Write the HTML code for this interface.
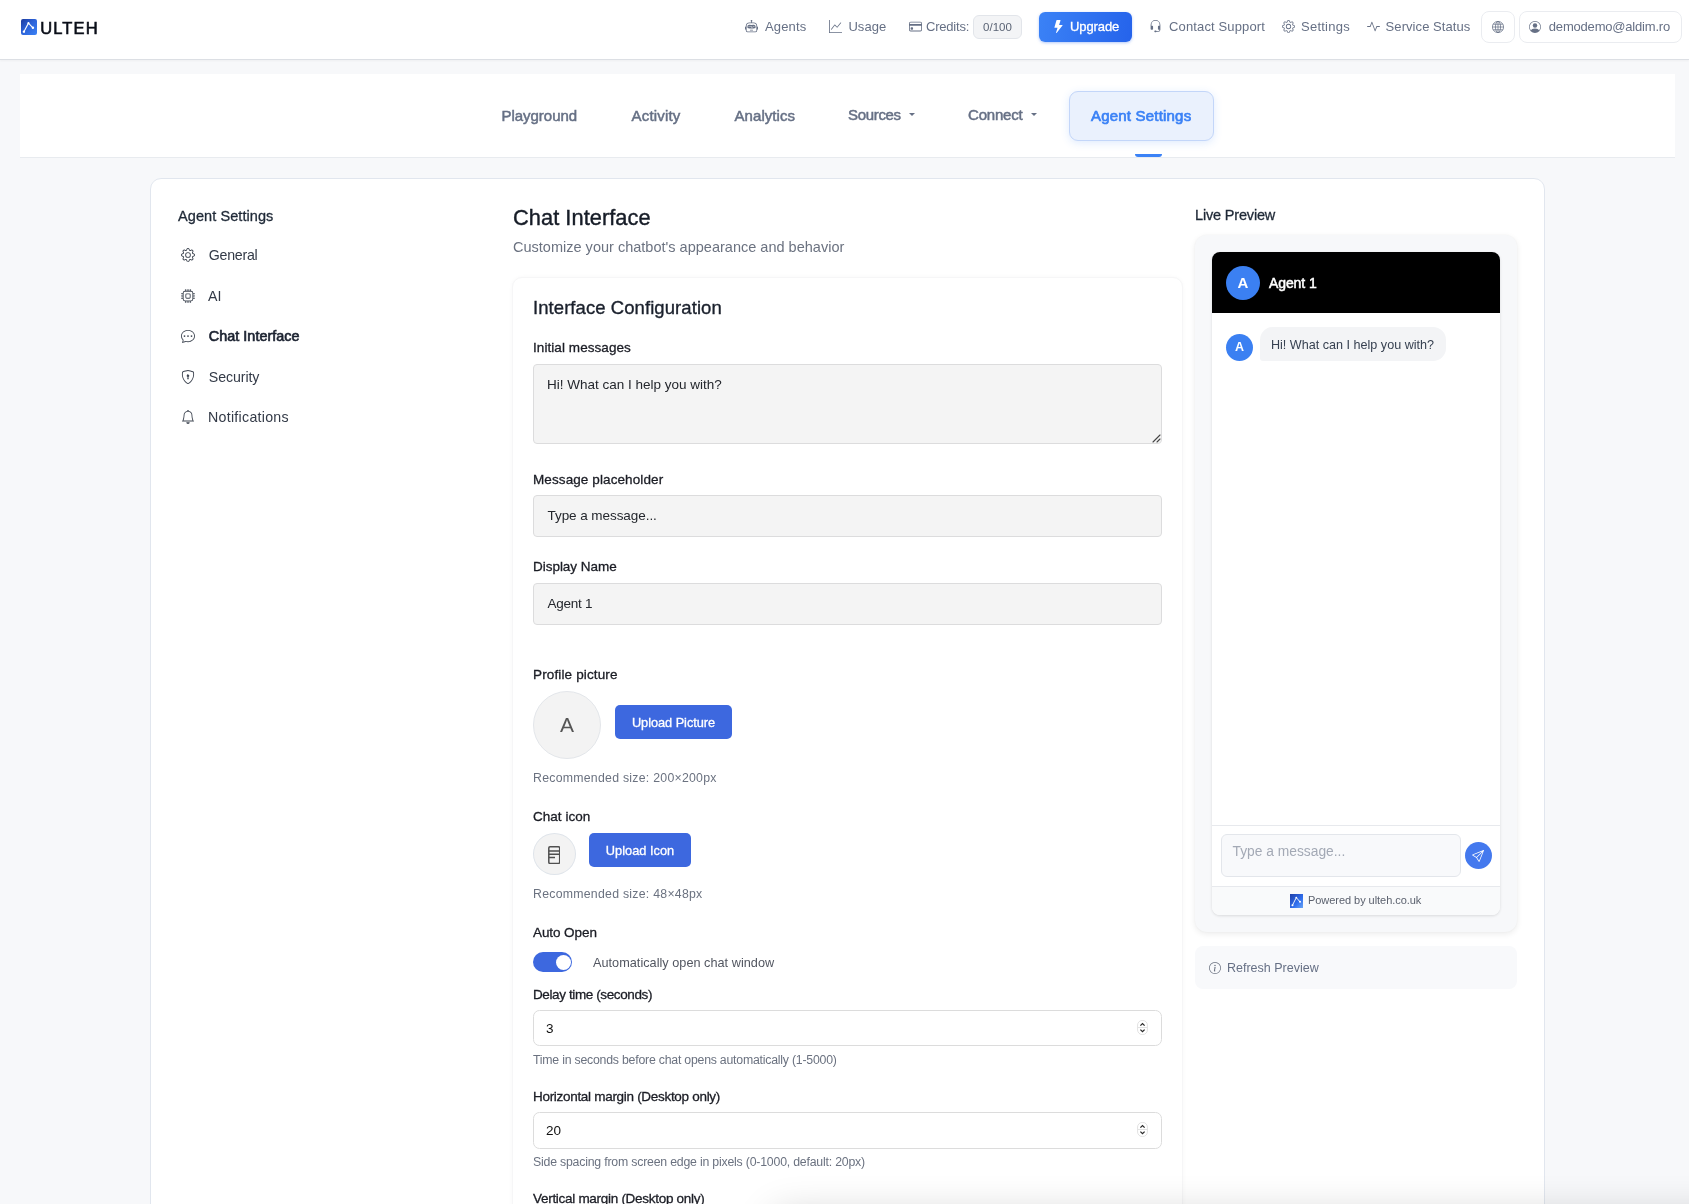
<!DOCTYPE html>
<html lang="en">
<head>
<meta charset="utf-8">
<title>Ulteh - Agent Settings - Chat Interface</title>
<style>
*{box-sizing:border-box;margin:0;padding:0}
html,body{width:1689px;height:1204px;overflow:hidden}
body{font-family:"Liberation Sans",Arial,sans-serif;background:#f7f8fa;color:#1f2937;position:relative;-webkit-font-smoothing:antialiased;will-change:transform}
svg{display:block}
.abs{position:absolute}
/* ---------- top nav ---------- */
#topnav{position:absolute;left:0;top:0;width:1689px;height:60px;background:#fff;border-bottom:1px solid #dcdfe4;box-shadow:0 1px 2px rgba(0,0,0,.04)}
#logo{position:absolute;left:21px;top:19px;width:15.500px;height:16px;border-radius:2px;background:linear-gradient(135deg,#1d3a9c 0%,#2c62d8 45%,#3b82f6 100%)}
#brand{position:absolute;left:40px;top:18px;font-size:16.500px;line-height:20px;font-weight:400;-webkit-text-stroke:.6px #0b0f19;letter-spacing:1.150px;color:#0b0f19}
.nl{position:absolute;top:18px;height:18px;line-height:18px;font-size:13px;color:#667085;white-space:nowrap}
.ni{position:absolute;color:#667085}
#credit-badge{position:absolute;left:973px;top:15px;width:49px;height:24px;border:1px solid #e2e5ea;background:#f3f4f6;border-radius:6px;font-size:11.5px;line-height:22px;text-align:center;color:#5b6475}
#upgrade{position:absolute;left:1039px;top:12px;width:93px;height:30px;border-radius:6px;background:linear-gradient(100deg,#3b82f6,#2563eb);box-shadow:0 1px 3px rgba(37,99,235,.35);color:#fff;font-size:13px;font-weight:400}
#upgrade span{position:absolute;left:31px;top:6px;line-height:18px;-webkit-text-stroke:.3px #fff;letter-spacing:-.1px}
.tbtn{position:absolute;top:11px;height:32px;border:1px solid #eaecf0;border-radius:8px;background:#fff}
/* ---------- tabs ---------- */
#tabs{position:absolute;left:20px;top:74px;width:1655px;height:84px;background:#fff;border-bottom:1px solid #e8ebef}
.tab{position:absolute;top:106px;height:20px;line-height:20px;font-size:15px;font-weight:400;-webkit-text-stroke:.5px currentColor;color:#667085;white-space:nowrap}
#tab-active{position:absolute;left:1069px;top:91px;width:145px;height:50px;border:1px solid #c3d6f9;background:#eaf1fd;border-radius:9px;box-shadow:0 2px 8px rgba(59,130,246,.16)}
#tab-ind{position:absolute;left:1135px;top:154px;width:27px;height:3px;background:#3b82f6;border-radius:0 0 3px 3px}
.caret{position:absolute;width:0;height:0;border-left:3px solid transparent;border-right:3px solid transparent;border-top:3px solid #667085}
/* ---------- main card ---------- */
#card{position:absolute;left:150px;top:178px;width:1395px;height:1100px;background:#fff;border:1px solid #e1e6ee;border-radius:11px}
.sb-title{position:absolute;left:178px;top:205.500px;font-size:14.500px;line-height:20px;color:#1f2937;-webkit-text-stroke:.3px #1f2937;white-space:nowrap}
.sb{position:absolute;left:208px;font-size:14.200px;line-height:20px;color:#333a47;white-space:nowrap}
.sb.on{-webkit-text-stroke:.65px #1b2230;color:#1b2230;font-size:14.400px}
.sbi{position:absolute;left:181px;color:#3f4652}
h1{position:absolute;left:513px;top:204px;font-size:21.800px;line-height:28px;font-weight:400;color:#161c27;-webkit-text-stroke:.4px #161c27;white-space:nowrap}
#sub{position:absolute;left:513px;top:237px;font-size:14.500px;line-height:20px;color:#6b7280;white-space:nowrap}
#inner{position:absolute;left:511.500px;top:277px;width:671px;height:1000px;border-radius:10px;background:#fff;border:1px solid #f6f6f7;box-shadow:0 0 4px rgba(0,0,0,.03)}
h2{position:absolute;left:533px;top:296px;font-size:18.500px;line-height:24px;font-weight:400;color:#1a202c;-webkit-text-stroke:.35px #1a202c;white-space:nowrap}
.lbl{position:absolute;left:533px;font-size:13.500px;line-height:18px;color:#1b1d25;-webkit-text-stroke:.3px #1b1d25;white-space:nowrap}
.fld{position:absolute;left:533px;width:629px;background:#f4f4f4;border:1px solid #dcdcdd;border-radius:4px;font-size:13.500px;color:#24272d;padding-left:14px;white-space:nowrap}
.num{position:absolute;left:533px;width:629px;background:#fff;border:1px solid #dcdcdc;border-radius:6.500px;font-size:13.5px;color:#111;padding-left:12px}
.help{position:absolute;left:533px;font-size:12.300px;line-height:16px;color:#6b7280;white-space:nowrap}
.btn{position:absolute;background:#3d68df;color:#fff;border-radius:5px;font-size:12.800px;text-align:center;-webkit-text-stroke:.3px #fff;white-space:nowrap}
.spin{position:absolute;width:9px;height:14px;border:1px solid #cfd2d7;border-radius:4px;background:#f7f7f7}
/* ---------- preview ---------- */
#pv-title{position:absolute;left:1195px;top:205px;font-size:14.500px;line-height:20px;color:#1f2937;-webkit-text-stroke:.3px #1f2937;white-space:nowrap}
#pv{position:absolute;left:1195px;top:235px;width:322px;height:697px;background:#f7f8fa;border-radius:12px;box-shadow:0 2px 6px rgba(0,0,0,.08),0 0 2px rgba(0,0,0,.04)}
#chat{position:absolute;left:1212px;top:252px;width:288px;height:663px;background:#fff;border-radius:8px;box-shadow:0 1px 3px rgba(0,0,0,.12);overflow:hidden}
#chat-h{position:absolute;left:0;top:0;width:288px;height:61px;background:#000}
.av{position:absolute;border-radius:50%;background:#3b80f2;color:#fff;font-weight:700;text-align:center}
#refresh{position:absolute;left:1195px;top:946px;width:322px;height:43px;background:#f8f9fb;border-radius:8px}
</style>
</head>
<body>
<div id="topnav">
  <svg id="logo" viewBox="0 0 16 16"><path d="M3 12.8 7.7 4l4.6 4.800" fill="none" stroke="#fff" stroke-width="1.1" stroke-linecap="round" stroke-linejoin="round"/><circle cx="3" cy="12.800" r="1.250" fill="#fff"/><circle cx="7.700" cy="4" r="1.100" fill="#fff"/><circle cx="12.300" cy="8.800" r="1.250" fill="#fff"/></svg>
  <div id="brand" style="letter-spacing:1.1px;left:40.3px">ULTEH</div>
  <svg class="ni" style="left:745px;top:20px" width="13" height="13" viewBox="0 0 16 16" fill="currentColor"><path d="M6 12.5a.5.5 0 0 1 .5-.5h3a.5.5 0 0 1 0 1h-3a.5.5 0 0 1-.5-.5ZM3 8.062C3 6.76 4.235 5.765 5.53 5.886a26.58 26.58 0 0 0 4.94 0C11.765 5.765 13 6.76 13 8.062v1.157a.933.933 0 0 1-.765.935c-.845.147-2.34.346-4.235.346-1.895 0-3.39-.2-4.235-.346A.933.933 0 0 1 3 9.219V8.062Zm4.542-.827a.25.25 0 0 0-.217.068l-.92.9a24.767 24.767 0 0 1-1.871-.183.25.25 0 0 0-.068.495c.55.076 1.232.149 2.02.193a.25.25 0 0 0 .189-.071l.754-.736.847 1.71a.25.25 0 0 0 .404.062l.932-.97a25.286 25.286 0 0 0 1.922-.188.25.25 0 0 0-.068-.495c-.538.074-1.207.145-1.98.189a.25.25 0 0 0-.166.076l-.754.785-.842-1.7a.25.25 0 0 0-.182-.135Z"/><path d="M8.5 1.866a1 1 0 1 0-1 0V3h-2A4.5 4.5 0 0 0 1 7.5V8a1 1 0 0 0-1 1v2a1 1 0 0 0 1 1v1a2 2 0 0 0 2 2h10a2 2 0 0 0 2-2v-1a1 1 0 0 0 1-1V9a1 1 0 0 0-1-1v-.5A4.5 4.5 0 0 0 10.5 3h-2V1.866ZM14 7.5V13a1 1 0 0 1-1 1H3a1 1 0 0 1-1-1V7.5A3.5 3.5 0 0 1 5.5 4h5A3.5 3.5 0 0 1 14 7.5Z"/></svg><div class="nl" style="left:765px;letter-spacing:0.16px">Agents</div>
  <svg class="ni" style="left:829px;top:20px" width="13" height="13" viewBox="0 0 16 16" fill="currentColor"><path fill-rule="evenodd" d="M0 0h1v15h15v1H0V0Zm14.817 3.113a.5.5 0 0 1 .07.704l-4.5 5.5a.5.5 0 0 1-.74.037L7.06 6.767l-3.656 5.027a.5.5 0 0 1-.808-.588l4-5.5a.5.5 0 0 1 .758-.06l2.609 2.61 4.15-5.073a.5.5 0 0 1 .704-.07Z"/></svg><div class="nl" style="letter-spacing:0.05px;left:848.4px">Usage</div>
  <svg class="ni" style="left:909px;top:20px" width="13" height="13" viewBox="0 0 16 16" fill="currentColor"><path d="M0 4a2 2 0 0 1 2-2h12a2 2 0 0 1 2 2v8a2 2 0 0 1-2 2H2a2 2 0 0 1-2-2V4zm2-1a1 1 0 0 0-1 1v1h14V4a1 1 0 0 0-1-1H2zm13 4H1v5a1 1 0 0 0 1 1h12a1 1 0 0 0 1-1V7z"/><path d="M2 10a1 1 0 0 1 1-1h1a1 1 0 0 1 1 1v1a1 1 0 0 1-1 1H3a1 1 0 0 1-1-1v-1z"/></svg><div class="nl" style="left:926px;letter-spacing:-0.21px">Credits:</div>
  <div id="credit-badge">0/100</div>
  <div id="upgrade"><svg class="abs" style="left:13px;top:8px;color:#fff" width="13" height="13" viewBox="0 0 16 16" fill="currentColor" style="color:#fff"><path d="M5.52.359A.5.5 0 0 1 6 0h4a.5.5 0 0 1 .474.658L8.694 6H12.5a.5.5 0 0 1 .395.807l-7 9a.5.5 0 0 1-.873-.454L6.823 9.5H3.5a.5.5 0 0 1-.48-.641l2.5-8.5z"/></svg><span>Upgrade</span></div>
  <svg class="ni" style="left:1149px;top:20px" width="13" height="13" viewBox="0 0 16 16" fill="currentColor"><path d="M8 1a5 5 0 0 0-5 5v1h1a1 1 0 0 1 1 1v3a1 1 0 0 1-1 1H3a1 1 0 0 1-1-1V6a6 6 0 1 1 12 0v6a2.5 2.5 0 0 1-2.5 2.5H9.366a1 1 0 0 1-.866.5h-1a1 1 0 1 1 0-2h1a1 1 0 0 1 .866.5H11.5A1.5 1.5 0 0 0 13 12h-1a1 1 0 0 1-1-1V8a1 1 0 0 1 1-1h1V6a5 5 0 0 0-5-5z"/></svg><div class="nl" style="left:1169px;letter-spacing:0.14px">Contact Support</div>
  <svg class="ni" style="left:1282px;top:20px" width="13" height="13" viewBox="0 0 16 16" fill="currentColor"><path d="M8 4.754a3.246 3.246 0 1 0 0 6.492 3.246 3.246 0 0 0 0-6.492zM5.754 8a2.246 2.246 0 1 1 4.492 0 2.246 2.246 0 0 1-4.492 0z"/><path d="M9.796 1.343c-.527-1.79-3.065-1.79-3.592 0l-.094.319a.873.873 0 0 1-1.255.52l-.292-.16c-1.64-.892-3.433.902-2.54 2.541l.159.292a.873.873 0 0 1-.52 1.255l-.319.094c-1.79.527-1.79 3.065 0 3.592l.319.094a.873.873 0 0 1 .52 1.255l-.16.292c-.892 1.64.901 3.434 2.541 2.54l.292-.159a.873.873 0 0 1 1.255.52l.094.319c.527 1.79 3.065 1.79 3.592 0l.094-.319a.873.873 0 0 1 1.255-.52l.292.16c1.64.893 3.434-.902 2.54-2.541l-.159-.292a.873.873 0 0 1 .52-1.255l.319-.094c1.79-.527 1.79-3.065 0-3.592l-.319-.094a.873.873 0 0 1-.52-1.255l.16-.292c.893-1.64-.902-3.433-2.541-2.54l-.292.159a.873.873 0 0 1-1.255-.52l-.094-.319zm-2.633.283c.246-.835 1.428-.835 1.674 0l.094.319a1.873 1.873 0 0 0 2.693 1.115l.291-.16c.764-.415 1.6.42 1.184 1.185l-.159.292a1.873 1.873 0 0 0 1.116 2.692l.318.094c.835.246.835 1.428 0 1.674l-.319.094a1.873 1.873 0 0 0-1.115 2.693l.16.291c.415.764-.42 1.6-1.185 1.184l-.291-.159a1.873 1.873 0 0 0-2.693 1.116l-.094.318c-.246.835-1.428.835-1.674 0l-.094-.319a1.873 1.873 0 0 0-2.692-1.115l-.292.16c-.764.415-1.6-.42-1.184-1.185l.159-.291A1.873 1.873 0 0 0 1.945 8.93l-.319-.094c-.835-.246-.835-1.428 0-1.674l.319-.094A1.873 1.873 0 0 0 3.06 4.377l-.16-.292c-.415-.764.42-1.6 1.185-1.184l.292.159a1.873 1.873 0 0 0 2.692-1.115l.094-.319z"/></svg><div class="nl" style="letter-spacing:0.24px;left:1301.0px">Settings</div>
  <svg class="ni" style="left:1367px;top:20px" width="13" height="13" viewBox="0 0 16 16" fill="currentColor"><path fill-rule="evenodd" d="M6 2a.5.5 0 0 1 .47.33L10 12.036l1.53-4.208A.5.5 0 0 1 12 7.5h3.5a.5.5 0 0 1 0 1h-3.15l-1.88 5.17a.5.5 0 0 1-.94 0L6 3.964 4.47 8.171A.5.5 0 0 1 4 8.5H.5a.5.5 0 0 1 0-1h3.15l1.88-5.17A.5.5 0 0 1 6 2Z"/></svg><div class="nl" style="letter-spacing:0.07px;left:1385.6px">Service Status</div>
  <div class="tbtn" style="left:1481px;width:34px"></div><svg class="ni" style="left:1492px;top:21px" width="12" height="12" viewBox="0 0 16 16" fill="currentColor"><g fill="none" stroke="currentColor" stroke-width="1"><circle cx="8" cy="8" r="7.5"/><ellipse cx="8" cy="8" rx="3.4" ry="7.5"/><path d="M8 .5v15M.5 8h15M1.6 4.3h12.8M1.6 11.7h12.8"/></g></svg>
  <div class="tbtn" style="left:1519px;width:163px"></div><svg class="ni" style="left:1529px;top:21px" width="12" height="12" viewBox="0 0 16 16" fill="currentColor"><path d="M11 6a3 3 0 1 1-6 0 3 3 0 0 1 6 0z"/><path fill-rule="evenodd" d="M0 8a8 8 0 1 1 16 0A8 8 0 0 1 0 8zm8-7a7 7 0 0 0-5.468 11.37C3.242 11.226 4.805 10 8 10s4.757 1.225 5.468 2.37A7 7 0 0 0 8 1z"/></svg><div class="nl" style="letter-spacing:-0.19px;left:1548.8px">demodemo@aldim.ro</div>
</div>
<div id="tabs"></div>
<div id="tab-active"></div><div id="tab-ind"></div>
<div class="tab" style="letter-spacing:-0.01px;left:501.4px">Playground</div>
<div class="tab" style="letter-spacing:0.16px;left:631.6px">Activity</div>
<div class="tab" style="left:734.500px;letter-spacing:0.07px">Analytics</div>
<div class="tab" style="left:848px;top:105px;letter-spacing:-0.32px">Sources</div><div class="caret" style="left:909px;top:113px"></div>
<div class="tab" style="left:968px;top:105px;letter-spacing:-0.20px">Connect</div><div class="caret" style="left:1031px;top:113px"></div>
<div class="tab" style="left:1091px;color:#3b82f6;-webkit-text-stroke:.7px #3b82f6;letter-spacing:0.20px">Agent Settings</div>
<div id="card"></div>
<div class="sb-title" style="letter-spacing:0.08px">Agent Settings</div>
<svg class="sbi" style="top:248px" width="14" height="14" viewBox="0 0 16 16" fill="currentColor"><path d="M8 4.754a3.246 3.246 0 1 0 0 6.492 3.246 3.246 0 0 0 0-6.492zM5.754 8a2.246 2.246 0 1 1 4.492 0 2.246 2.246 0 0 1-4.492 0z"/><path d="M9.796 1.343c-.527-1.79-3.065-1.79-3.592 0l-.094.319a.873.873 0 0 1-1.255.52l-.292-.16c-1.64-.892-3.433.902-2.54 2.541l.159.292a.873.873 0 0 1-.52 1.255l-.319.094c-1.79.527-1.79 3.065 0 3.592l.319.094a.873.873 0 0 1 .52 1.255l-.16.292c-.892 1.64.901 3.434 2.541 2.54l.292-.159a.873.873 0 0 1 1.255.52l.094.319c.527 1.79 3.065 1.79 3.592 0l.094-.319a.873.873 0 0 1 1.255-.52l.292.16c1.64.893 3.434-.902 2.54-2.541l-.159-.292a.873.873 0 0 1 .52-1.255l.319-.094c1.79-.527 1.79-3.065 0-3.592l-.319-.094a.873.873 0 0 1-.52-1.255l.16-.292c.893-1.64-.902-3.433-2.541-2.54l-.292.159a.873.873 0 0 1-1.255-.52l-.094-.319zm-2.633.283c.246-.835 1.428-.835 1.674 0l.094.319a1.873 1.873 0 0 0 2.693 1.115l.291-.16c.764-.415 1.6.42 1.184 1.185l-.159.292a1.873 1.873 0 0 0 1.116 2.692l.318.094c.835.246.835 1.428 0 1.674l-.319.094a1.873 1.873 0 0 0-1.115 2.693l.16.291c.415.764-.42 1.6-1.185 1.184l-.291-.159a1.873 1.873 0 0 0-2.693 1.116l-.094.318c-.246.835-1.428.835-1.674 0l-.094-.319a1.873 1.873 0 0 0-2.692-1.115l-.292.16c-.764.415-1.6-.42-1.184-1.185l.159-.291A1.873 1.873 0 0 0 1.945 8.93l-.319-.094c-.835-.246-.835-1.428 0-1.674l.319-.094A1.873 1.873 0 0 0 3.06 4.377l-.16-.292c-.415-.764.42-1.6 1.185-1.184l.292.159a1.873 1.873 0 0 0 2.692-1.115l.094-.319z"/></svg><div class="sb" style="top:245px;letter-spacing:-0.27px;left:208.8px">General</div>
<svg class="sbi" style="top:289px" width="14" height="14" viewBox="0 0 16 16" fill="currentColor"><path d="M5 0a.5.5 0 0 1 .5.5V2h1V.5a.5.5 0 0 1 1 0V2h1V.5a.5.5 0 0 1 1 0V2h1V.5a.5.5 0 0 1 1 0V2A2.5 2.5 0 0 1 14 4.5h1.5a.5.5 0 0 1 0 1H14v1h1.5a.5.5 0 0 1 0 1H14v1h1.5a.5.5 0 0 1 0 1H14v1h1.5a.5.5 0 0 1 0 1H14a2.5 2.5 0 0 1-2.5 2.5v1.5a.5.5 0 0 1-1 0V14h-1v1.5a.5.5 0 0 1-1 0V14h-1v1.5a.5.5 0 0 1-1 0V14h-1v1.5a.5.5 0 0 1-1 0V14A2.5 2.5 0 0 1 2 11.5H.5a.5.5 0 0 1 0-1H2v-1H.5a.5.5 0 0 1 0-1H2v-1H.5a.5.5 0 0 1 0-1H2v-1H.5a.5.5 0 0 1 0-1H2A2.5 2.5 0 0 1 4.5 2V.5A.5.5 0 0 1 5 0zm-.5 3A1.5 1.5 0 0 0 3 4.5v7A1.5 1.5 0 0 0 4.5 13h7a1.5 1.5 0 0 0 1.5-1.5v-7A1.5 1.5 0 0 0 11.5 3h-7zM5 6.5A1.5 1.5 0 0 1 6.5 5h3A1.5 1.5 0 0 1 11 6.5v3A1.5 1.5 0 0 1 9.5 11h-3A1.5 1.5 0 0 1 5 9.5v-3zM6.5 6a.5.5 0 0 0-.5.5v3a.5.5 0 0 0 .5.5h3a.5.5 0 0 0 .5-.5v-3a.5.5 0 0 0-.5-.5h-3z"/></svg><div class="sb" style="top:286px">AI</div>
<svg class="sbi" style="top:329px" width="14" height="14" viewBox="0 0 16 16" fill="currentColor"><path d="M5 8a1 1 0 1 1-2 0 1 1 0 0 1 2 0zm4 0a1 1 0 1 1-2 0 1 1 0 0 1 2 0zm3 1a1 1 0 1 0 0-2 1 1 0 0 0 0 2z"/><path d="m2.165 15.803.02-.004c1.83-.363 2.948-.842 3.468-1.105A9.06 9.06 0 0 0 8 15c4.418 0 8-3.134 8-7s-3.582-7-8-7-8 3.134-8 7c0 1.76.743 3.37 1.97 4.6a10.437 10.437 0 0 1-.524 2.318l-.003.011a10.722 10.722 0 0 1-.244.637c-.079.186.074.394.273.362a21.673 21.673 0 0 0 .693-.125zm.8-3.108a1 1 0 0 0-.287-.801C1.618 10.83 1 9.468 1 8c0-3.192 3.004-6 7-6s7 2.808 7 6c0 3.193-3.004 6-7 6a8.06 8.06 0 0 1-2.088-.272 1 1 0 0 0-.711.074c-.387.196-1.24.57-2.634.893a10.97 10.97 0 0 0 .398-2z"/></svg><div class="sb on" style="top:326px;letter-spacing:0.03px;left:208.8px">Chat Interface</div>
<svg class="sbi" style="top:370px" width="14" height="14" viewBox="0 0 16 16" fill="currentColor"><path d="M5.338 1.59a61.44 61.44 0 0 0-2.837.856.481.481 0 0 0-.328.39c-.554 4.157.726 7.19 2.253 9.188a10.725 10.725 0 0 0 2.287 2.233c.346.244.652.42.893.533.12.057.218.095.293.118a.55.55 0 0 0 .101.025.615.615 0 0 0 .1-.025c.076-.023.174-.061.294-.118.24-.113.547-.29.893-.533a10.726 10.726 0 0 0 2.287-2.233c1.527-1.997 2.807-5.031 2.253-9.188a.48.48 0 0 0-.328-.39c-.651-.213-1.75-.56-2.837-.855C9.552 1.29 8.531 1.067 8 1.067c-.53 0-1.552.223-2.662.524zM5.072.56C6.157.265 7.31 0 8 0s1.843.265 2.928.56c1.11.3 2.229.655 2.887.87a1.54 1.54 0 0 1 1.044 1.262c.596 4.477-.787 7.795-2.465 9.99a11.775 11.775 0 0 1-2.517 2.453 7.159 7.159 0 0 1-1.048.625c-.28.132-.581.24-.829.24s-.548-.108-.829-.24a7.158 7.158 0 0 1-1.048-.625 11.777 11.777 0 0 1-2.517-2.453C1.928 10.487.545 7.169 1.141 2.692A1.54 1.54 0 0 1 2.185 1.43 62.456 62.456 0 0 1 5.072.56z"/><path d="M9.5 6.5a1.5 1.5 0 0 1-1 1.415l.385 1.99a.5.5 0 0 1-.491.595h-.788a.5.5 0 0 1-.49-.595l.384-1.99a1.5 1.5 0 1 1 2-1.415z"/></svg><div class="sb" style="top:367px;letter-spacing:-0.09px;left:208.8px">Security</div>
<svg class="sbi" style="top:410px" width="14" height="14" viewBox="0 0 16 16" fill="currentColor"><path d="M8 16a2 2 0 0 0 2-2H6a2 2 0 0 0 2 2zM8 1.918l-.797.161A4.002 4.002 0 0 0 4 6c0 .628-.134 2.197-.459 3.742-.16.767-.376 1.566-.663 2.258h10.244c-.287-.692-.502-1.49-.663-2.258C12.134 8.197 12 6.628 12 6a4.002 4.002 0 0 0-3.203-3.92L8 1.917zM14.22 12c.223.447.481.801.78 1H1c.299-.199.557-.553.78-1C2.68 10.2 3 6.88 3 6c0-2.42 1.72-4.44 4.005-4.901a1 1 0 1 1 1.99 0A5.002 5.002 0 0 1 13 6c0 .88.32 4.2 1.22 6z"/></svg><div class="sb" style="top:407px;letter-spacing:0.28px">Notifications</div>
<h1 style="letter-spacing:0.05px">Chat Interface</h1>
<div id="sub" style="letter-spacing:0.01px">Customize your chatbot's appearance and behavior</div>
<div id="inner"></div>
<h2 style="letter-spacing:0.07px">Interface Configuration</h2>
<div class="lbl" style="top:339px;letter-spacing:0.07px">Initial messages</div>
<div class="fld" style="top:364px;height:80px;line-height:18px;padding-top:11px;padding-left:13px">Hi! What can I help you with?</div>
<svg class="abs" style="left:1152px;top:434px" width="9" height="9" viewBox="0 0 9 9"><path d="M8 1 1 8M8 5 5 8" stroke="#444" stroke-width="1.100" stroke-linecap="round" fill="none"/></svg>
<div class="lbl" style="top:471px;letter-spacing:0.10px">Message placeholder</div>
<div class="fld" style="top:495px;height:42px;line-height:40.500px;padding-left:13.500px;letter-spacing:-0.06px">Type a message...</div>
<div class="lbl" style="top:558px;letter-spacing:-0.03px">Display Name</div>
<div class="fld" style="top:583px;height:42px;line-height:40px;padding-left:13.500px;letter-spacing:-0.25px">Agent 1</div>
<div class="lbl" style="top:666px;letter-spacing:0.14px">Profile picture</div>
<div class="abs" style="left:533px;top:690.500px;width:68px;height:68px;border-radius:50%;background:#f3f3f3;border:1px solid #e3e6ea;text-align:center;line-height:65px;font-size:21px;color:#555">A</div>
<div class="btn" style="top:705px;width:117px;height:34px;line-height:35px;letter-spacing:-0.05px;left:615px">Upload Picture</div>
<div class="help" style="top:770px;letter-spacing:0.26px">Recommended size: 200×200px</div>
<div class="lbl" style="top:808px;letter-spacing:0.03px">Chat icon</div>
<div class="abs" style="left:533px;top:833px;width:43px;height:42px;border-radius:50%;background:#f3f3f3;border:1px solid #dfe4ea"></div>
<svg class="abs" style="left:547.800px;top:845.500px" width="12.500" height="18.200" viewBox="0 0 12.500 18.200"><rect x=".8" y=".8" width="10.900" height="16.600" rx="1.200" fill="none" stroke="#505050" stroke-width="1.500"/><path d="M.8 4.900h10.900M.8 8.200h10.900M.8 11.500h6.200" stroke="#505050" stroke-width="1.500" fill="none"/></svg>
<div class="btn" style="top:833px;width:102px;height:34px;line-height:35px;left:589px">Upload Icon</div>
<div class="help" style="top:886px;letter-spacing:0.26px">Recommended size: 48×48px</div>
<div class="lbl" style="top:924px;letter-spacing:-0.08px">Auto Open</div>
<div class="abs" style="left:533px;top:952px;width:39px;height:20px;border-radius:10px;background:#3d68df"></div>
<div class="abs" style="left:555.500px;top:954.500px;width:15px;height:15px;border-radius:50%;background:#fff"></div>
<div class="help" style="left:593px;top:955px;font-size:12.700px;color:#525660;letter-spacing:0.02px">Automatically open chat window</div>
<div class="lbl" style="top:986px;letter-spacing:-0.39px">Delay time (seconds)</div>
<div class="num" style="top:1010px;height:36px;line-height:35px">3</div>
<div class="help" style="top:1052px;letter-spacing:-0.22px">Time in seconds before chat opens automatically (1-5000)</div>
<div class="lbl" style="top:1088px;letter-spacing:-0.30px">Horizontal margin (Desktop only)</div>
<div class="num" style="top:1112px;height:37px;line-height:36px">20</div>
<div class="help" style="top:1154px;letter-spacing:-0.20px">Side spacing from screen edge in pixels (0-1000, default: 20px)</div>
<div class="lbl" style="top:1190px;letter-spacing:-0.29px">Vertical margin (Desktop only)</div>
<svg class="abs" style="left:1137px;top:1020px" width="11" height="15" viewBox="0 0 11 15"><rect x=".6" y=".5" width="9.800" height="14" rx="4.500" fill="#fff" stroke="#e2e2e2" stroke-width="1"/><path d="M.6 7.500h9.800" stroke="#e2e2e2" stroke-width="1"/><path d="M3.400 5.600 5.500 3.600 7.600 5.600M3.400 9.600 5.500 11.600 7.600 9.600" stroke="#2a2a2a" stroke-width="1.300" fill="none"/></svg>
<svg class="abs" style="left:1137px;top:1122px" width="11" height="15" viewBox="0 0 11 15"><rect x=".6" y=".5" width="9.800" height="14" rx="4.500" fill="#fff" stroke="#e2e2e2" stroke-width="1"/><path d="M.6 7.500h9.800" stroke="#e2e2e2" stroke-width="1"/><path d="M3.400 5.600 5.500 3.600 7.600 5.600M3.400 9.600 5.500 11.600 7.600 9.600" stroke="#2a2a2a" stroke-width="1.300" fill="none"/></svg>
<div id="pv-title" style="letter-spacing:-0.17px">Live Preview</div>
<div id="pv"></div>
<div id="chat">
  <div id="chat-h"></div>
  <div class="av" style="left:14px;top:14px;width:34px;height:34px;line-height:34px;font-size:15px">A</div>
  <div class="abs" style="top:21px;color:#fff;-webkit-text-stroke:.5px #fff;font-size:14px;line-height:20px;white-space:nowrap;letter-spacing:-0.1px;left:57px">Agent 1</div>
  <div class="av" style="left:14px;top:82px;width:27px;height:27px;line-height:27px;font-size:12.5px">A</div>
  <div class="abs" style="top:75px;width:186px;height:34px;background:#f3f4f6;border-radius:13px 13px 13px 3px;font-size:12.600px;line-height:36px;color:#374151;text-align:center;white-space:nowrap;left:48px;text-indent:-1px">Hi! What can I help you with?</div>
  <div class="abs" style="left:0;top:573px;width:288px;height:1px;background:#e7e9ed"></div>
  <div class="abs" style="top:582px;width:240px;height:43px;border:1px solid #e3e6eb;border-radius:6px;background:#f8f9fb;font-size:13.800px;color:#a3a9b5;padding:8px 0 0 10.500px;line-height:18px;left:9px">Type a message...</div>
  <div class="abs" style="left:253px;top:590px;width:27px;height:27px;border-radius:50%;background:#4479ee"></div>
  <svg class="abs" style="left:259.500px;top:597.500px;color:#fff" width="12" height="12" viewBox="0 0 16 16" fill="currentColor"><path d="M15.854.146a.5.5 0 0 1 .11.54l-5.819 14.547a.75.75 0 0 1-1.329.124l-3.178-4.995L.643 7.184a.75.75 0 0 1 .124-1.33L15.314.037a.5.5 0 0 1 .54.11ZM6.636 10.07l2.761 4.338L14.13 2.576 6.636 10.07Zm6.787-8.201L1.591 6.602l4.339 2.76 7.494-7.493Z"/></svg>
  <div class="abs" style="left:0;top:634px;width:288px;height:29px;background:#f9fafb;border-top:1px solid #e7e9ed"></div>
  <svg class="abs" style="left:78px;top:642px" width="13" height="14" viewBox="0 0 13 14"><defs><linearGradient id="lg2" x1="0" y1="0" x2="1" y2="1"><stop offset="0" stop-color="#1f3fa8"/><stop offset=".6" stop-color="#2f6fee"/><stop offset="1" stop-color="#6aa5f5"/></linearGradient></defs><rect width="13" height="14" fill="url(#lg2)"/><path d="M2.500 11.200 6.300 3.600l3.700 4.200" fill="none" stroke="#fff" stroke-width=".9" stroke-linecap="round" stroke-linejoin="round"/><circle cx="2.500" cy="11.200" r="1" fill="#fff"/><circle cx="6.300" cy="3.600" r=".9" fill="#fff"/><circle cx="10" cy="7.800" r="1" fill="#fff"/></svg>
  <div class="abs" style="left:96px;top:640px;font-size:11px;line-height:16px;color:#5b616e;white-space:nowrap;letter-spacing:-0.05px">Powered by ulteh.co.uk</div>
</div>
<div id="refresh"></div>
<svg class="abs" style="left:1209px;top:962px;color:#6b7280" width="12" height="12" viewBox="0 0 16 16" fill="currentColor"><path d="M8 15A7 7 0 1 1 8 1a7 7 0 0 1 0 14zm0 1A8 8 0 1 0 8 0a8 8 0 0 0 0 16z"/><path d="m8.93 6.588-2.29.287-.082.38.45.083c.294.07.352.176.288.469l-.738 3.468c-.194.897.105 1.319.808 1.319.545 0 1.178-.252 1.465-.598l.088-.416c-.2.176-.492.246-.686.246-.275 0-.375-.193-.304-.533L8.93 6.588zM9 4.500a1 1 0 1 1-2 0 1 1 0 0 1 2 0z"/></svg>
<div class="abs" style="top:959px;font-size:12.500px;line-height:18px;color:#667085;white-space:nowrap;left:1227px">Refresh Preview</div>
<div class="abs" style="left:775px;top:1215px;width:1000px;height:60px;background:#fff;box-shadow:0 0 40px rgba(0,0,0,.2)"></div>
</body>
</html>
